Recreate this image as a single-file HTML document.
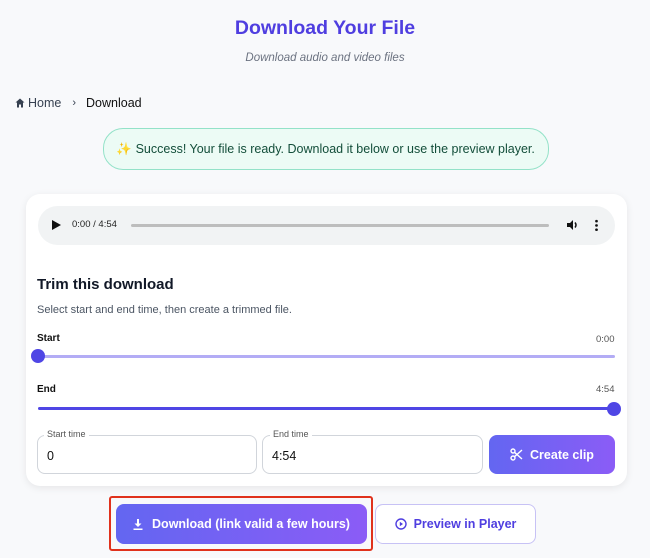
<!DOCTYPE html>
<html><head><meta charset="utf-8"><style>
*{box-sizing:border-box;margin:0;padding:0}
body{width:650px;height:558px;background:#f8f9fb;font-family:"Liberation Sans",sans-serif;position:relative;overflow:hidden;color:#1f2937}
.a{position:absolute}
.t{left:0;width:650px;text-align:center}
</style></head><body>
<div class="a t" style="top:17px;font-size:19.5px;font-weight:bold;color:#4f3ee0">Download Your File</div>
<div class="a t" style="top:52px;font-size:11.5px;font-style:italic;color:#6b7280">Download audio and video files</div>
<div class="a" style="left:15px;top:96px;font-size:12.5px;color:#374151;display:flex;align-items:center">
<svg width="10" height="10" viewBox="0 0 10 10"><path d="M5 0.5L0.5 4.5H2V9.5H4V6.5H6V9.5H8V4.5H9.5Z" fill="#374151"/></svg>
<span style="margin-left:3px">Home</span><span style="margin:0 10px 0 11px;font-size:11px">›</span><span style="color:#111">Download</span></div>
<div class="a" style="left:103px;top:128px;width:446px;height:42px;background:#ecfbf5;border:1.5px solid #93e2c8;border-radius:20px;font-size:12.5px;color:#134e3a;display:flex;align-items:center;padding-left:12px">
<span style="color:#d4a017;margin-right:4px">✨</span>Success! Your file is ready. Download it below or use the preview player.</div>
<div class="a" style="left:26px;top:194px;width:601px;height:292px;background:#fff;border-radius:14px;box-shadow:0 2px 8px rgba(0,0,0,.08)"></div>
<div class="a" style="left:38px;top:206px;width:577px;height:39px;background:#f1f3f4;border-radius:20px"></div>
<svg class="a" style="left:52px;top:220px" width="9" height="10"><path d="M0 0L9 5L0 10Z" fill="#111"/></svg>
<div class="a" style="left:72px;top:219px;font-size:9.5px;color:#222">0:00 / 4:54</div>
<div class="a" style="left:131px;top:224px;width:418px;height:3px;background:#bdbdbd;border-radius:2px"></div>
<svg class="a" style="left:567px;top:219px" width="12" height="12" viewBox="0 0 12 12"><path d="M0 4H3L6 1V11L3 8H0Z" fill="#111"/><path d="M8 3.5Q10 6 8 8.5" stroke="#111" stroke-width="1.5" fill="none"/></svg>
<div class="a" style="left:595px;top:219px;width:3px;height:12px;background:radial-gradient(circle,#111 1.2px,transparent 1.5px) 0 0/3px 4.3px"></div>
<div class="a" style="left:37px;top:276px;font-size:15px;font-weight:bold;color:#111827">Trim this download</div>
<div class="a" style="left:37px;top:304px;font-size:11px;color:#4b5563">Select start and end time, then create a trimmed file.</div>
<div class="a" style="left:37px;top:333px;font-size:10px;font-weight:bold;color:#111">Start</div>
<div class="a" style="left:596px;top:334px;font-size:9.5px;color:#555">0:00</div>
<div class="a" style="left:38px;top:355px;width:577px;height:3px;background:#b3acf5;border-radius:2px"></div>
<div class="a" style="left:31px;top:349px;width:14px;height:14px;border-radius:50%;background:#4f46e5"></div>
<div class="a" style="left:37px;top:384px;font-size:10px;font-weight:bold;color:#111">End</div>
<div class="a" style="left:596px;top:384px;font-size:9.5px;color:#555">4:54</div>
<div class="a" style="left:38px;top:407px;width:577px;height:3px;background:#4f46e5;border-radius:2px"></div>
<div class="a" style="left:607px;top:402px;width:14px;height:14px;border-radius:50%;background:#4f46e5"></div>
<div class="a" style="left:37px;top:435px;width:220px;height:39px;border:1px solid #d1d5db;border-radius:8px;font-size:12.5px;padding:13px 0 0 9px;color:#111">0</div>
<div class="a" style="left:44px;top:429px;font-size:9px;color:#555;background:#fff;padding:0 3px">Start time</div>
<div class="a" style="left:262px;top:435px;width:221px;height:39px;border:1px solid #d1d5db;border-radius:8px;font-size:12.5px;padding:13px 0 0 9px;color:#111">4:54</div>
<div class="a" style="left:270px;top:429px;font-size:9px;color:#555;background:#fff;padding:0 3px">End time</div>
<div class="a" style="left:489px;top:435px;width:126px;height:39px;border-radius:8px;background:linear-gradient(90deg,#6366f1,#8b5cf6);color:#fff;font-size:12.5px;font-weight:bold;display:flex;align-items:center;justify-content:center">
<svg width="13" height="13" viewBox="0 0 13 13" style="margin-right:7px" stroke="#fff" stroke-width="1.4" fill="none"><circle cx="3" cy="3" r="2"/><circle cx="3" cy="10" r="2"/><path d="M4.5 4.3L12 11M4.5 8.7L12 2"/></svg>Create clip</div>
<div class="a" style="left:109px;top:496px;width:264px;height:55px;border:2px solid #e0321c;border-radius:3px"></div>
<div class="a" style="left:116px;top:504px;width:251px;height:40px;border-radius:8px;background:linear-gradient(90deg,#6366f1,#8b5cf6);color:#fff;font-size:12.5px;font-weight:bold;display:flex;align-items:center;justify-content:center">
<svg width="10" height="11" viewBox="0 0 10 11" style="margin-right:9px"><path d="M4 0H6V4.5H8.5L5 8L1.5 4.5H4Z M0.5 9.5H9.5V11H0.5Z" fill="#fff"/></svg>Download (link valid a few hours)</div>
<div class="a" style="left:375px;top:504px;width:161px;height:40px;border-radius:8px;border:1.5px solid #c7c2f5;background:#fff;color:#4f3ee0;font-size:12.5px;font-weight:bold;display:flex;align-items:center;justify-content:center">
<svg width="12" height="12" viewBox="0 0 12 12" style="margin-right:7px"><circle cx="6" cy="6" r="5" stroke="#4f3ee0" stroke-width="1.4" fill="none"/><path d="M4.8 3.8L8 6L4.8 8.2Z" fill="#4f3ee0"/></svg>Preview in Player</div>
</body></html>
